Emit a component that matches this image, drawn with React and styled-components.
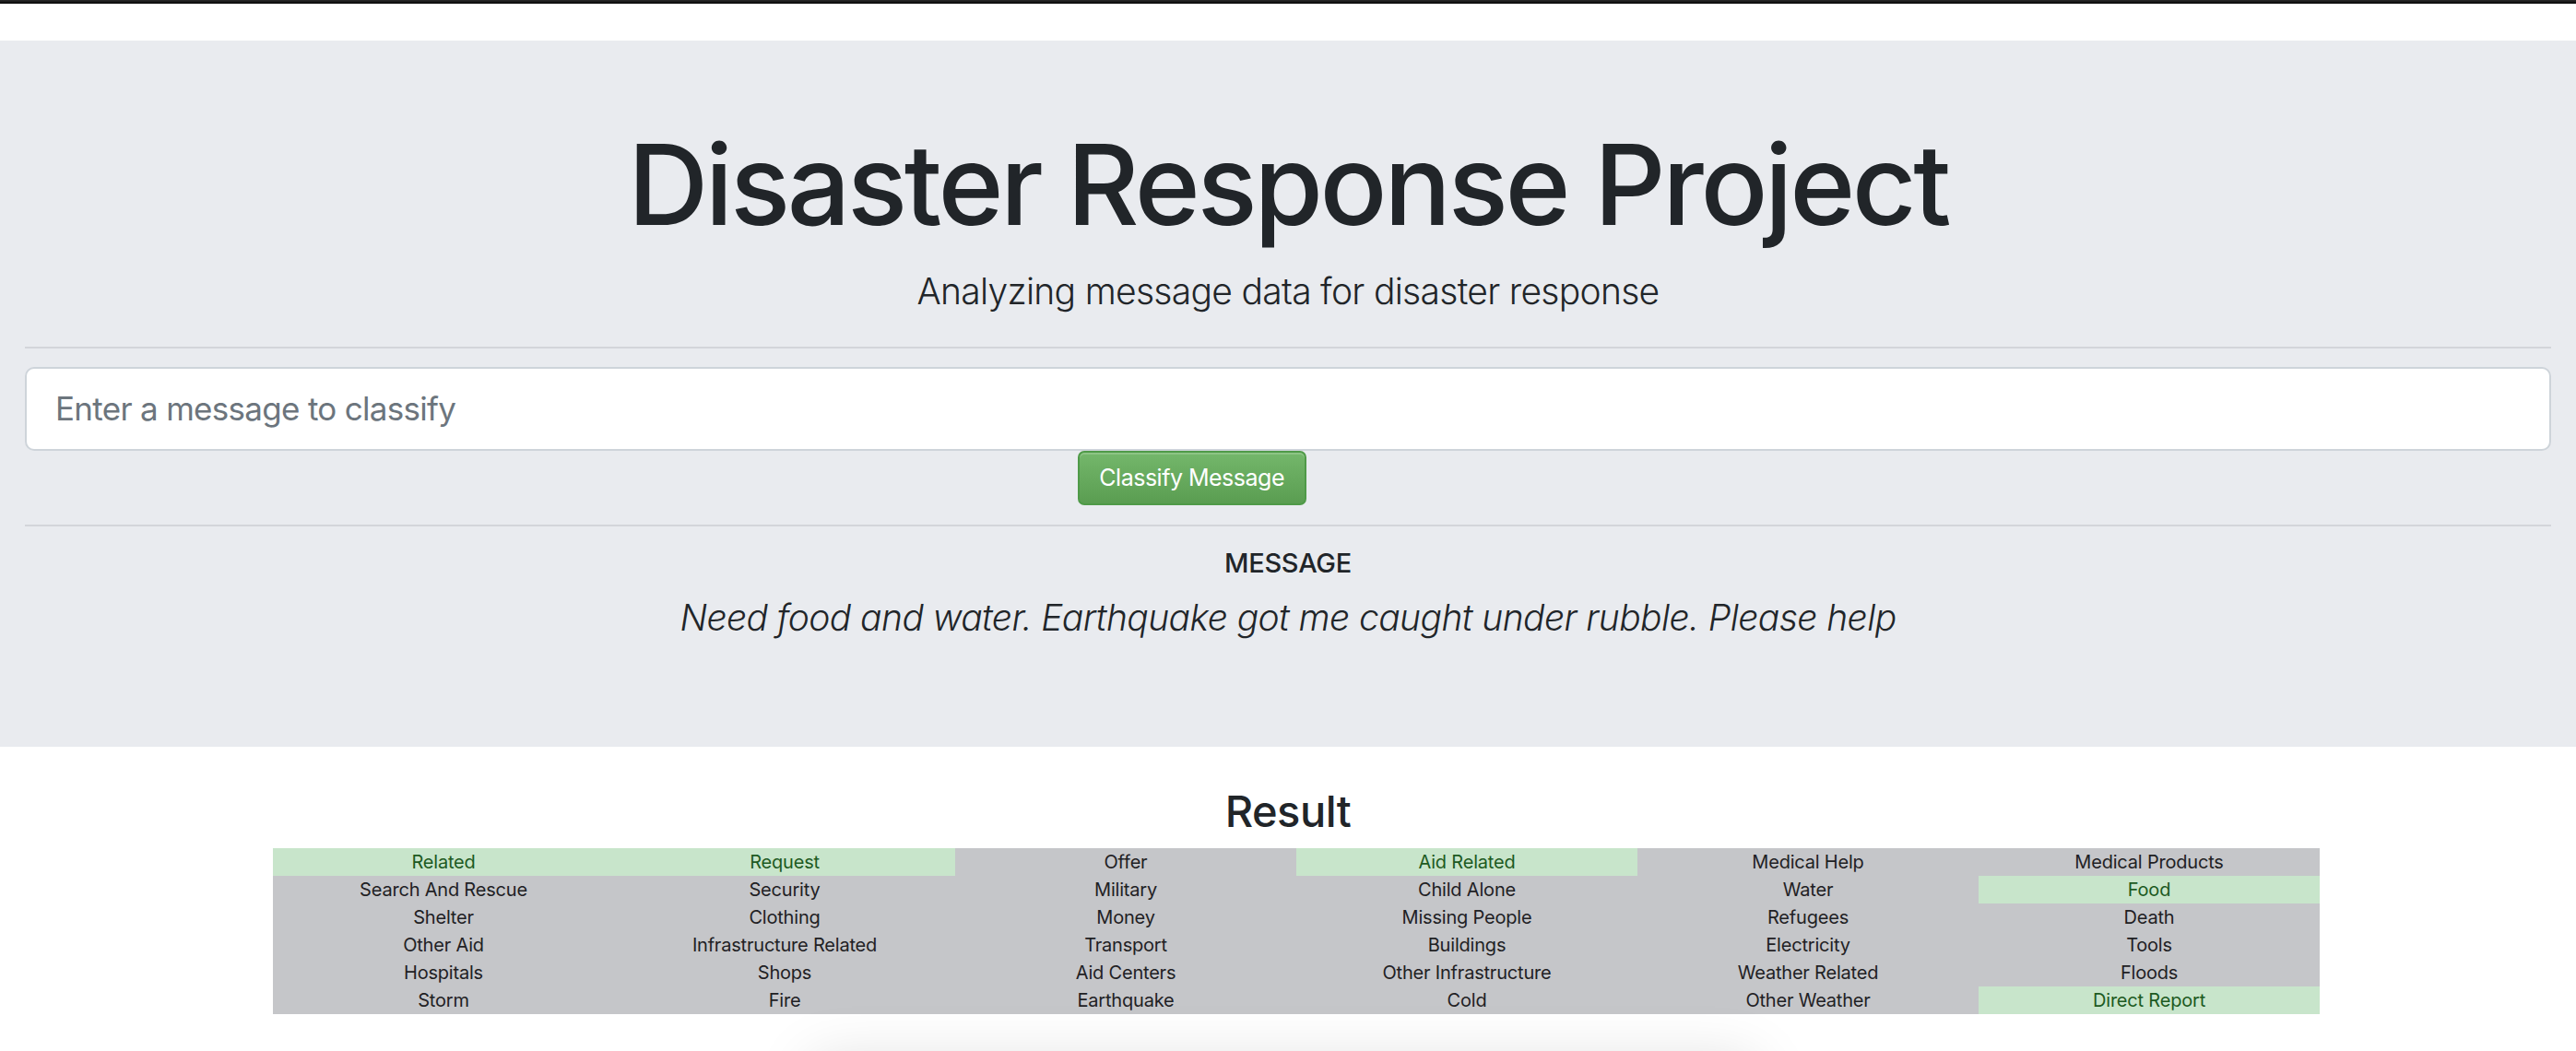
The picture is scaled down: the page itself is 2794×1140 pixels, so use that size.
import React from "react";
import styled, { createGlobalStyle } from "styled-components";

const GlobalStyle = createGlobalStyle`
  html, body {
    margin: 0;
    padding: 0;
    background: #ffffff;
    overflow: hidden;
  }
  body {
    font-family: Inter, "Noto Sans", "Liberation Sans", sans-serif;
    color: #212529;
  }
  * { box-sizing: border-box; }
`;

const Page = styled.div`
  width: 2794px;
  height: 1140px;
  overflow: hidden;
`;

const TopBar = styled.div`
  height: 4px;
  background: linear-gradient(#2b2b2b, #050505);
  margin-bottom: 40px;
`;

const Jumbotron = styled.header`
  background: #e9ebef;
  height: 766px;
  padding: 84px 27px 0;
  display: flex;
  flex-direction: column;
`;

const Title = styled.h1`
  margin: 0;
  text-align: center;
  font-size: 121px;
  line-height: 1.2;
  font-weight: 500;
  letter-spacing: -0.028em;
  color: #212529;
`;

const Lead = styled.p`
  margin: 20px 0 0;
  text-align: center;
  font-size: 39px;
  line-height: 1.2;
  font-weight: 300;
  letter-spacing: -0.018em;
  color: #212529;
`;

const Rule = styled.hr`
  margin: ${(p) => p.$top}px 0 0;
  border: 0;
  border-top: 2px solid #d3d5da;
  height: 0;
  flex-shrink: 0;
`;

const MessageInput = styled.input`
  margin-top: 20px;
  height: 91px;
  width: 100%;
  flex-shrink: 0;
  border: 2px solid #ced4da;
  border-radius: 10px;
  background: #ffffff;
  padding: 0 31px;
  font-family: Inter, "Liberation Sans", sans-serif;
  font-size: 35px;
  letter-spacing: -0.02em;
  color: #495057;
  outline: none;
  &::placeholder {
    color: #6c757d;
    opacity: 1;
  }
`;

const ButtonRow = styled.div`
  display: flex;
  padding-left: calc(5 / 12 * 100%);
`;

const ClassifyButton = styled.button`
  width: 248px;
  height: 59px;
  border: 2px solid #4f9a48;
  border-radius: 7px;
  background: linear-gradient(#74b76b, #5a9d51);
  color: #ffffff;
  font-family: Inter, "Liberation Sans", sans-serif;
  font-size: 25px;
  font-weight: 400;
  letter-spacing: -0.02em;
  padding: 0;
  box-shadow: inset 0 2px 0 rgba(255, 255, 255, 0.18);
`;

const Label = styled.h5`
  margin: 23px 0 0;
  text-align: center;
  font-size: 29px;
  line-height: 1.2;
  font-weight: 500;
  letter-spacing: -0.01em;
`;

const Quote = styled.p`
  margin: 18px 0 0;
  text-align: center;
  font-size: 39px;
  line-height: 1.2;
  font-weight: 300;
  font-style: italic;
  letter-spacing: -0.015em;
`;

const Results = styled.section`
  display: flex;
  flex-direction: column;
  align-items: flex-start;
`;

const ResultTitle = styled.h2`
  align-self: stretch;
  margin: 42px 0 0;
  text-align: center;
  font-size: 47px;
  line-height: 1.2;
  font-weight: 500;
  letter-spacing: -0.01em;
`;

const Grid = styled.div`
  margin: 12px 0 0 296px;
  display: grid;
  grid-template-columns: repeat(6, 370px);
  grid-auto-rows: 30px;
`;

const Cell = styled.div`
  display: flex;
  align-items: center;
  justify-content: center;
  font-size: 20px;
  line-height: 30px;
  letter-spacing: -0.01em;
  background: ${(p) => (p.$on ? "#c8e5cb" : "#c5c6c9")};
  color: ${(p) => (p.$on ? "#1d5a22" : "#1f2124")};
`;

const ChartCard = styled.div`
  align-self: center;
  margin: 62px 0 0 -10px;
  width: 1000px;
  height: 400px;
  background: #ffffff;
  box-shadow: 0 0 60px 12px rgba(0, 0, 0, 0.13);
  flex-shrink: 0;
`;

const categories = [
  "Related", "Request", "Offer", "Aid Related", "Medical Help", "Medical Products",
  "Search And Rescue", "Security", "Military", "Child Alone", "Water", "Food",
  "Shelter", "Clothing", "Money", "Missing People", "Refugees", "Death",
  "Other Aid", "Infrastructure Related", "Transport", "Buildings", "Electricity", "Tools",
  "Hospitals", "Shops", "Aid Centers", "Other Infrastructure", "Weather Related", "Floods",
  "Storm", "Fire", "Earthquake", "Cold", "Other Weather", "Direct Report",
];

const positive = new Set(["Related", "Request", "Aid Related", "Food", "Direct Report"]);

export default function App() {
  return (
    <Page>
      <GlobalStyle />
      <TopBar />
      <Jumbotron>
        <Title>Disaster Response Project</Title>
        <Lead>Analyzing message data for disaster response</Lead>
        <Rule $top={36} />
        <MessageInput placeholder="Enter a message to classify" />
        <ButtonRow>
          <ClassifyButton>Classify Message</ClassifyButton>
        </ButtonRow>
        <Rule $top={21} />
        <Label>MESSAGE</Label>
        <Quote>Need food and water. Earthquake got me caught under rubble. Please help</Quote>
      </Jumbotron>
      <Results>
        <ResultTitle>Result</ResultTitle>
        <Grid>
          {categories.map((c) => (
            <Cell key={c} $on={positive.has(c)}>
              {c}
            </Cell>
          ))}
        </Grid>
        <ChartCard />
      </Results>
    </Page>
  );
}
